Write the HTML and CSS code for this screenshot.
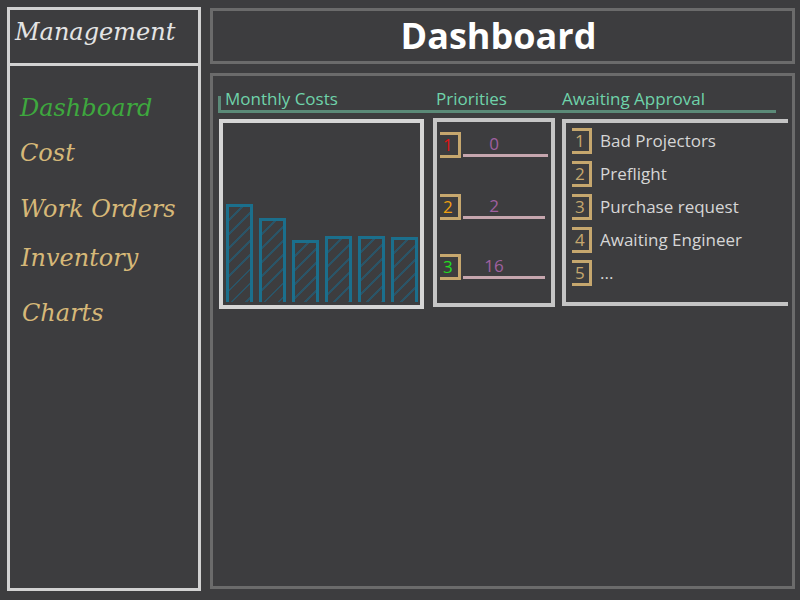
FILE: index.html
```html
<!DOCTYPE html>
<html>
<head>
<meta charset="utf-8">
<link rel="stylesheet" href="styles.css">
</head>
<body>
<div class="app">
  <aside class="sidebar">
    <div class="brand">Management</div>
    <nav class="nav">
      <div class="nav-item active n1">Dashboard</div>
      <div class="nav-item n2">Cost</div>
      <div class="nav-item n3">Work Orders</div>
      <div class="nav-item n4">Inventory</div>
      <div class="nav-item n5">Charts</div>
    </nav>
  </aside>
  <main class="main">
    <header class="title-box"><h1 class="title">Dashboard</h1></header>
    <section class="content">
      <div class="head-row">
        <span class="tick"></span>
        <span class="label l1">Monthly Costs</span>
        <span class="label l2">Priorities</span>
        <span class="label l3">Awaiting Approval</span>
      </div>
      <div class="panels">
        <div class="chart">
          <div class="bar" style="height:98px"></div>
          <div class="bar" style="height:84px"></div>
          <div class="bar" style="height:62px"></div>
          <div class="bar" style="height:66px"></div>
          <div class="bar" style="height:66px"></div>
          <div class="bar" style="height:65px"></div>
        </div>
        <div class="priorities">
          <div class="prow r1"><span class="badge red">1</span><span class="pval">0</span></div>
          <div class="prow r2"><span class="badge orange">2</span><span class="pval">2</span></div>
          <div class="prow r3"><span class="badge green">3</span><span class="pval">16</span></div>
        </div>
        <div class="approval">
          <div class="arow"><span class="badge tan">1</span><span class="atext">Bad Projectors</span></div>
          <div class="arow"><span class="badge tan">2</span><span class="atext">Preflight</span></div>
          <div class="arow"><span class="badge tan">3</span><span class="atext">Purchase request</span></div>
          <div class="arow"><span class="badge tan">4</span><span class="atext">Awaiting Engineer</span></div>
          <div class="arow"><span class="badge tan">5</span><span class="atext">...</span></div>
        </div>
      </div>
    </section>
  </main>
</div>
</body>
</html>
```
FILE: styles.css
```css
* { box-sizing: border-box; }
html, body { margin: 0; padding: 0; }
body {
  background: #3d3d3f;
  width: 800px;
  height: 600px;
  overflow: hidden;
  font-family: "Open Sans", "Noto Sans", sans-serif;
}
.app {
  display: flex;
  gap: 9px;
  padding: 7px 0 0 7px;
}
.sidebar {
  width: 194px;
  height: 584px;
  border: 3px solid #d2d2d2;
  display: flex;
  flex-direction: column;
}
.brand {
  height: 56px;
  border-bottom: 3px solid #d2d2d2;
  font-family: "DejaVu Serif", serif;
  font-style: italic;
  font-size: 24px;
  color: #e4e4e4;
  padding: 8px 0 0 5px;
  line-height: 28px;
}
.nav {
  display: flex;
  flex-direction: column;
  padding-left: 10px;
}
.nav-item {
  font-family: "DejaVu Serif", serif;
  font-style: italic;
  font-size: 24px;
  line-height: 30px;
  color: #d6b878;
}
.nav-item.active { color: #3ea83e; }
.n1 { margin-top: 27px; }
.n2 { margin-top: 15px; }
.n3 { margin-top: 26px; }
.n4 { margin-top: 19px; padding-left: 1px; }
.n5 { margin-top: 25px; padding-left: 2px; }

.main {
  width: 585px;
  display: flex;
  flex-direction: column;
  gap: 9px;
  margin-top: 1px;
}
.title-box {
  height: 56px;
  border: 3px solid #6b6b6b;
  display: flex;
  align-items: center;
  justify-content: center;
}
.title {
  margin: 0;
  font-family: "Open Sans", sans-serif;
  font-weight: 700;
  font-size: 36px;
  color: #ffffff;
  line-height: 40px;
  padding-right: 8px;
}
.content {
  height: 516px;
  border: 3px solid #6b6b6b;
  padding: 12px 0 0 5px;
}
.head-row {
  display: flex;
  align-items: flex-end;
  width: 558px;
  height: 25px;
  border-bottom: 3px solid #5b8a78;
}
.tick {
  width: 3px;
  height: 14px;
  background: #5b8a78;
  flex: none;
}
.label {
  font-size: 17px;
  line-height: 22px;
  color: #6fd3aa;
  flex: none;
}
.l1 { width: 215px; padding-left: 4px; }
.l2 { width: 126px; }

.panels {
  display: flex;
  align-items: flex-start;
  margin-top: 5px;
}
.chart {
  margin-left: 1px;
  margin-top: 1px;
  width: 205px;
  height: 190px;
  border: 4px solid #d6d6d6;
  display: flex;
  align-items: flex-end;
  gap: 6px;
  padding: 0 0 3px 3px;
}
.bar {
  width: 27px;
  border: 3px solid #1b6f8c;
  border-bottom: none;
  background: repeating-linear-gradient(135deg,
    transparent 0px, transparent 8px,
    rgba(30, 100, 130, 0.6) 8px, rgba(30, 100, 130, 0.6) 10px);
}
.priorities {
  margin-left: 9px;
  width: 122px;
  height: 189px;
  border: 4px solid #c6c6c6;
  padding: 10px 0 0 3px;
  display: flex;
  flex-direction: column;
}
.prow {
  display: flex;
  align-items: flex-end;
  height: 26px;
}
.r2 { margin-top: 36px; }
.r3 { margin-top: 34px; }
.badge {
  width: 21px;
  height: 26px;
  border: 3px solid #c6a76e;
  border-left: none;
  font-size: 17px;
  line-height: 20px;
  padding-left: 3px;
  flex: none;
}
.red { color: #e01414; }
.orange { color: #f0a010; }
.green { color: #22dd22; }
.tan { color: #c6a76e; padding-left: 3px; }
.pval {
  width: 85px;
  margin-left: 2px;
  margin-bottom: 1px;
  border-bottom: 3px solid #c6a6ae;
  color: #a060a0;
  font-size: 17px;
  line-height: 20px;
  padding-right: 23px;
  text-align: center;
}
.r2 .pval, .r3 .pval { width: 82px; padding-right: 20px; }
.approval {
  margin-left: 7px;
  margin-top: 1px;
  width: 226px;
  height: 187px;
  border: 4px solid #c4c4c4;
  border-right: none;
  padding: 5px 0 0 6px;
  display: flex;
  flex-direction: column;
  gap: 7px;
}
.arow {
  display: flex;
  align-items: center;
  height: 26px;
}
.arow .badge { width: 20px; }
.atext {
  margin-left: 8px;
  color: #d6d6d6;
  font-size: 17px;
  line-height: 20px;
}
```
